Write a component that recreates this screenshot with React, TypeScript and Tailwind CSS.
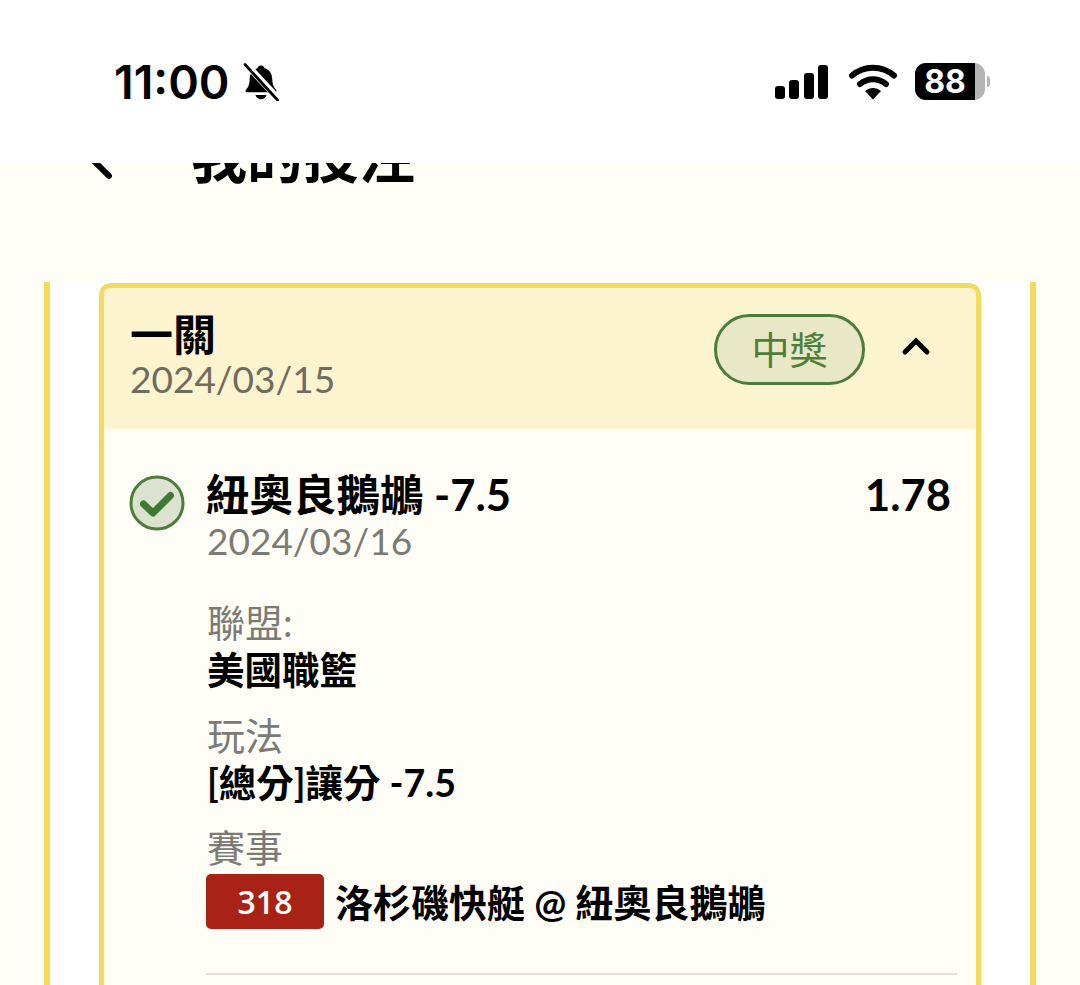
const font = "font-['Lato','Noto_Sans_CJK_TC',sans-serif]";

function BellOff() {
  return (
    <svg width="38" height="38" viewBox="0 0 38 38" className="ml-[12px] -mt-px">
      <path d="M19 2.500c2 0 3.200 1.200 3.500 2.800 5 1.300 7.500 5.400 7.700 10.500.2 5 1 8 3.800 11 .9 1 .4 2.400-1 2.400H5c-1.400 0-1.900-1.400-1-2.400 2.800-3 3.500-6 3.700-11 .2-5.100 2.800-9.200 7.800-10.500C15.800 3.700 17 2.500 19 2.500z" fill="#000" />
      <path d="M13.500 32h11c-.5 2.600-2.800 4.300-5.500 4.300s-5-1.700-5.500-4.300z" fill="#000" />
      <path d="M3.500 0.500 36.500 36" stroke="#fff" strokeWidth="6.500" />
      <path d="M3 1.500 35.500 37" stroke="#000" strokeWidth="2.800" strokeLinecap="round" />
    </svg>
  );
}

function Signal() {
  return (
    <div className="flex items-end gap-[4.500px]">
      <div className="h-[13px] w-[10px] rounded-[3px] bg-black" />
      <div className="h-[19px] w-[10px] rounded-[3px] bg-black" />
      <div className="h-[26px] w-[10px] rounded-[3px] bg-black" />
      <div className="h-[34px] w-[10px] rounded-[3px] bg-black" />
    </div>
  );
}

function Wifi() {
  return (
    <svg width="48" height="36" viewBox="0 0 48 36" className="-mr-[3px]">
      <path d="M3 11.500C15 1 33 1 45 11.500" fill="none" stroke="#000" strokeWidth="6" strokeLinecap="round" />
      <path d="M11 20c8-6.500 18-6.500 26 0" fill="none" stroke="#000" strokeWidth="6" strokeLinecap="round" />
      <path d="M16 27c5-4 11-4 16 0l-8 8.500z" fill="#000" />
    </svg>
  );
}

function Battery() {
  return (
    <div className="flex items-center">
      <div className="flex h-[37px] w-[70px] overflow-hidden rounded-[11px] bg-[#b5b5b5]">
        <div className="flex w-[60px] items-center justify-center bg-black font-['Inter',sans-serif] text-[32px] leading-none font-bold text-white">
          88
        </div>
      </div>
      <div className="ml-[2px] h-[11px] w-[3px] rounded-r-[3px] bg-[#b5b5b5]" />
    </div>
  );
}

function Field({ label, value, top }: { label: string; value: string; top: string }) {
  return (
    <div className={top}>
      <div className="text-[38px] leading-[47px] text-[#7b7b76]">{label}</div>
      <div className="text-[37.500px] leading-[47px] font-bold text-black">{value}</div>
    </div>
  );
}

export default function App() {
  return (
    <div className={`h-[985px] w-[1080px] overflow-hidden bg-[#fffef6] ${font}`}>
      <div className="flex h-[163px] items-start justify-between bg-white pt-[50px] pr-[90px] pl-[114px]">
        <div className="flex items-center pt-[2px]">
          <span className="font-['Inter',sans-serif] text-[46.500px] leading-[60px] font-semibold text-black">11:00</span>
          <BellOff />
        </div>
        <div className="flex items-center gap-[21px] pt-[13px]">
          <Signal />
          <Wifi />
          <Battery />
        </div>
      </div>

      <div className="h-[119px] overflow-hidden">
        <div className="-mt-[41px] flex items-center pl-[85px]">
          <svg width="28" height="50" viewBox="0 0 28 50" className="shrink-0">
            <path d="M24 4 4 24l20 20" fill="none" stroke="#000" strokeWidth="6" strokeLinecap="round" />
          </svg>
          <span className="ml-[78px] text-[56px] leading-[70px] font-bold text-black">我的投注</span>
        </div>
      </div>

      <div className="mx-[44px] border-x-[6px] border-[#f5d95c] bg-white px-[49px] pt-px">
        <div className="overflow-hidden rounded-[12px] border-[5px] border-[#f5d95c] bg-[#fffef6]">
          <div className="flex h-[141px] justify-between bg-[#fcf3cf] pt-[23px] pr-[45px] pl-[26px]">
            <div>
              <div className="text-[43px] leading-[47px] font-bold text-black">一關</div>
              <div className="-mt-px text-[37px] leading-[44px] text-[#6f6c5e]">2024/03/15</div>
            </div>
            <div className="flex h-[76px] items-center">
              <div className="flex h-[71px] w-[151px] items-center justify-center rounded-full border-[3px] border-[#4d7c3a] bg-[#e8e8c6] text-[38px] text-[#4d7f3a]">
                中獎
              </div>
              <svg width="30" height="22" viewBox="0 0 30 22" className="-mt-[6px] ml-[36px]">
                <path d="M4 17 15 6l11 11" fill="none" stroke="#000" strokeWidth="5" strokeLinecap="round" />
              </svg>
            </div>
          </div>

          <div className="pt-[42px] pr-[25px] pb-[60px] pl-[26px]">
            <div className="flex">
              <svg width="56" height="56" viewBox="0 0 56 56" className="mt-[4px] -ml-[1px] shrink-0">
                <circle cx="28" cy="28" r="26" fill="#dbe3d0" stroke="#4d7c3a" strokeWidth="3" />
                <path d="M14.500 29 24 38 41.500 20.500" fill="none" stroke="#3f7a32" strokeWidth="7" strokeLinecap="round" strokeLinejoin="round" />
              </svg>
              <div className="ml-[22px] flex-1">
                <div className="flex justify-between">
                  <span className="-ml-px text-[43.500px] leading-[47px] font-bold text-black">紐奧良鵝鶘 -7.5</span>
                  <span className="text-[43.500px] leading-[47px] font-bold text-black">1.78</span>
                </div>
                <div className="-mt-px text-[37px] leading-[47px] text-[#7b7b76]">2024/03/16</div>
              </div>
            </div>

            <div className="ml-[77px]">
              <Field top="mt-[35px]" label="聯盟:" value="美國職籃" />
              <Field top="mt-[19px]" label="玩法" value="[總分]讓分 -7.5" />
              <div className="mt-[18px]">
                <div className="text-[38px] leading-[47px] text-[#7b7b76]">賽事</div>
                <div className="mt-[3px] flex items-center">
                  <div className="-ml-px flex h-[55px] w-[118px] items-center justify-center rounded-[5px] bg-[#a82315] font-['Open_Sans',sans-serif] text-[32px] font-semibold text-white">
                    318
                  </div>
                  <span className="mt-[2px] ml-[11px] text-[38px] leading-[47px] font-bold text-black">洛杉磯快艇 @ 紐奧良鵝鶘</span>
                </div>
              </div>
              <div className="mt-[44px] -mr-[6px] -ml-px h-[2px] bg-[#e5e4dc]" />
            </div>
          </div>
        </div>
      </div>
    </div>
  );
}
